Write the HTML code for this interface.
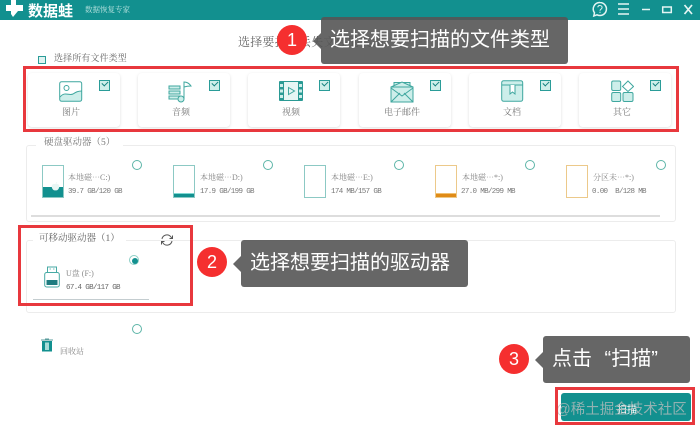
<!DOCTYPE html>
<html lang="zh"><head><meta charset="utf-8">
<style>
html,body{margin:0;padding:0;width:700px;height:429px;overflow:hidden;background:#fff}
body{position:relative;font-family:"Liberation Serif","Noto Serif CJK SC",serif;color:#777}
.a,svg.a{position:absolute}
.t{position:absolute;white-space:nowrap;line-height:1}
.card{position:absolute;top:73px;width:92px;height:54px;background:#fff;border-radius:4px;box-shadow:0 1px 3px rgba(0,0,0,.13)}
.card .t{left:0;width:86px;text-align:center;top:35px;font-size:9px;color:#777}
.card svg{position:absolute;left:31px;top:8px}
.cb{position:absolute;left:71px;top:7px;width:9px;height:9px;border:1px solid #2a9c98;background:#cfeeea}
.cb:after{content:"";position:absolute;left:1.5px;top:0;width:5px;height:3px;border:solid #14807e;border-width:0 0 1.5px 1.5px;transform:rotate(-45deg)}
.panel{position:absolute;left:26px;width:648px;border:1px solid #ececec;border-radius:3px;background:#fff}
.radio{position:absolute;width:8px;height:8px;border:1px solid #5db5a8;border-radius:50%;background:#fff}
.dr{position:absolute;top:165px;width:20px;height:31px;border:1px solid #8cc9c4;background:#fff;overflow:hidden}
.dr i{position:absolute;left:0;right:0;bottom:0;display:block}
.n{font-size:8px;color:#888}
.s{font:7.5px "Liberation Mono","Noto Serif CJK SC",monospace;letter-spacing:-.65px;color:#777}
.tip{position:absolute;background:rgba(85,85,85,.9);border-radius:3px;color:#fff;font-family:"Liberation Sans","Noto Sans CJK SC",sans-serif;white-space:nowrap}
.tip:before{content:"";position:absolute;left:-8px;top:50%;margin-top:-8px;border:8px solid transparent;border-left:0;border-right-color:rgba(85,85,85,.9)}
.num{position:absolute;width:30px;height:30px;border-radius:50%;background:#f52f2f;color:#fff;font:18px/30px "Liberation Sans",sans-serif;text-align:center}
.rb{position:absolute;border:3px solid #e8383d;box-sizing:border-box}
</style></head><body>
<div class="a" style="left:0;top:0;width:700px;height:20px;background:#12908f"></div>
<svg class="a" style="left:5px;top:0" width="20" height="18" viewBox="0 0 20 18"><path d="M6 0h5v5h7v6h-5l-5 6-2-3v-3H1V5h5z" fill="#fff"/></svg>
<div class="t" style="left:28px;top:0;font:bold 15px 'Liberation Sans','Noto Sans CJK SC',sans-serif;color:#fff;letter-spacing:0">数据蛙</div>
<div class="t" style="left:85px;top:6px;font-size:7.5px;color:#bfe5e2">数据恢复专家</div>
<svg class="a" style="left:590px;top:0" width="110" height="20" viewBox="0 0 110 20" fill="none" stroke="#e4f5f3" stroke-width="1.5"><path d="M10 2.500a6.500 6.500 0 1 1-3 12.300L3.800 16l.7-3.200A6.500 6.500 0 0 1 10 2.500z"/><path d="M7.800 7.300c.3-2.500 4.400-2.200 4.300.2 0 1.700-2.100 1.500-2.100 3.300M10 11.700v1.200" stroke-width="1"/><path d="M28 4h11M28 9h11M28 14h11"/><path d="M52 9.500h8"/><rect x="72.700" y="7" width="8.600" height="5.500"/><path d="M94.500 5l7.500 9M102 5l-7.500 9" stroke-width="1.700"/></svg>

<div class="t" style="left:238px;top:36px;font-size:12px;color:#666;letter-spacing:.2px">选择要扫描丢失文件的类型</div>
<div class="a" style="left:38px;top:56px;width:6px;height:6px;border:1px solid #2a9c98;background:#dff3f1"></div>
<div class="t" style="left:54px;top:54px;font-size:9px;color:#666;letter-spacing:.1px">选择所有文件类型</div>

<div class="card" style="left:28px"><svg width="24" height="22" viewBox="0 0 24 22" fill="none" stroke="#3fa79f"><path d="M1 16c5-6 9-1 13-3 3-2 5-3 9-3v10H1z" fill="#cdeeea" stroke="none"/><rect x=".7" y=".7" width="22" height="19.600" rx="2"/><circle cx="7.500" cy="7" r="2.500"/><path d="M1 16c5-6 9-1 13-3 3-2 5-3 9-3"/></svg><div class="t">图片</div><div class="cb"></div></div>
<div class="card" style="left:138px"><svg style="left:30px" width="26" height="22" viewBox="0 0 26 22" fill="none" stroke="#3fa79f"><rect x="1" y="5" width="11" height="3" fill="#cdeeea"/><rect x="1" y="10" width="11" height="3" fill="#cdeeea"/><rect x="1" y="15" width="11" height="3" fill="#cdeeea"/><circle cx="13" cy="18" r="3" fill="#cdeeea"/><path d="M16 18V1c2 0 5 1 7 4-2 0-4 0-7 1"/></svg><div class="t">音频</div><div class="cb"></div></div>
<div class="card" style="left:248px"><svg width="24" height="20" viewBox="0 0 24 20"><rect width="24" height="20" rx="1" fill="#2a9a94"/><rect x="5" y="1" width="14" height="18" fill="#e6f6f4"/><path d="M1 3h3v3H1zM1 8.500h3v3H1zM1 14h3v3H1zM20 3h3v3h-3zM20 8.500h3v3h-3zM20 14h3v3h-3z" fill="#cdeeea"/><path d="M9.500 6.500l6 3.500-6 3.500z" fill="none" stroke="#3fa79f"/></svg><div class="t">视频</div><div class="cb"></div></div>
<div class="card" style="left:359px"><svg width="24" height="22" viewBox="0 0 24 22" fill="none" stroke="#3fa79f"><path d="M4 5V1.500h16V5" fill="#cdeeea"/><path d="M1 6l11-5 11 5v15H1z" fill="#cdeeea"/><path d="M1 6h22M1 21l9-9M23 21l-9-9M1 7l11 8 11-8"/></svg><div class="t">电子邮件</div><div class="cb"></div></div>
<div class="card" style="left:469px"><svg style="left:32px;top:7px" width="23" height="22" viewBox="0 0 23 22" fill="none" stroke="#3fa79f"><rect x=".7" y=".7" width="21" height="20.600" rx="2" fill="#cdeeea"/><path d="M1 5h21"/><path d="M9 5v9l2.500-2 2.500 2V5" fill="#fff"/></svg><div class="t">文档</div><div class="cb"></div></div>
<div class="card" style="left:579px"><svg style="left:32px;top:7px" width="23" height="22" viewBox="0 0 23 22" fill="none" stroke="#3fa79f"><rect x=".7" y="1" width="9" height="9.500" rx="1.500" fill="#cdeeea"/><path d="M17 1l5.500 5.500L17 11.500l-5.500-5z" fill="#fff"/><rect x=".7" y="12.500" width="9" height="9" rx="1.500" fill="#cdeeea"/><rect x="12" y="12.500" width="10" height="9" rx="1.500" fill="#cdeeea"/></svg><div class="t">其它</div><div class="cb"></div></div>
<div class="rb" style="left:23px;top:66px;width:656px;height:66px"></div>

<div class="panel" style="top:145px;height:75px"></div>
<div class="t" style="left:36px;top:139px;padding:0 8px;background:#fff;font-size:9.500px;color:#777">硬盘驱动器（5）</div>
<div class="a" style="left:31px;top:215px;width:629px;height:2px;background:#ddd"></div>

<div class="dr" style="left:42px"><i style="height:10px;background:#12908f"></i></div>
<svg class="a" style="left:51px;top:182px" width="9" height="9" viewBox="0 0 9 9"><path d="M1 4.500C1 2 3 2 4.500 2.500 6 2 8 2 8 4.500 8 7 6 8.500 4.500 8 3 8.500 1 7 1 4.500zM4.500 2.500L6 0" fill="#e8f6f4" stroke="#e8f6f4" stroke-width=".6"/></svg>
<div class="t n" style="left:68px;top:174px">本地磁⋯C:)</div><div class="t s" style="left:68px;top:188px">39.7 GB/120 GB</div><div class="radio" style="left:132px;top:160px"></div>
<div class="dr" style="left:173px"><i style="height:3px;background:#12908f;border-top:1px solid #7fd8d2"></i></div>
<div class="t n" style="left:200px;top:174px">本地磁⋯D:)</div><div class="t s" style="left:200px;top:188px">17.9 GB/199 GB</div><div class="radio" style="left:263px;top:160px"></div>
<div class="dr" style="left:304px"></div>
<div class="t n" style="left:331px;top:174px">本地磁⋯E:)</div><div class="t s" style="left:331px;top:188px">174 MB/157 GB</div><div class="radio" style="left:394px;top:160px"></div>
<div class="dr" style="left:435px;border-color:#ecc98a"><i style="height:3px;background:#e08b16;border-top:1px solid #f0c070"></i></div>
<div class="t n" style="left:462px;top:174px">本地磁⋯*:)</div><div class="t s" style="left:461px;top:188px">27.0 MB/299 MB</div><div class="radio" style="left:525px;top:160px"></div>
<div class="dr" style="left:566px;border-color:#ecc98a"></div>
<div class="t n" style="left:593px;top:174px">分区未⋯*:)</div><div class="t s" style="left:592px;top:188px">0.00&nbsp; B/128 MB</div><div class="radio" style="left:656px;top:160px"></div>

<div class="panel" style="top:240px;height:71px"></div>
<div class="t" style="left:33px;top:235px;padding:0 6px;background:#fff;font-size:9.500px;color:#666">可移动驱动器（1）</div>
<svg class="a" style="left:160px;top:233px" width="14" height="14" viewBox="0 0 14 14" fill="none" stroke="#555"><path d="M2 6a5 5 0 0 1 9-2l1 1.500M12 8a5 5 0 0 1-9 2L2 8.500"/><path d="M12.500 2.500v3h-3M1.500 11.500v-3h3"/></svg>
<svg class="a" style="left:44px;top:266px" width="16" height="22" viewBox="0 0 16 22" fill="none" stroke="#47aaa4"><rect x="3.500" y="1" width="9" height="5.500"/><path d="M5.500 3h1.500M9 3h1.500" stroke-width=".8"/><rect x=".7" y="6.500" width="14.600" height="14.500" rx="2"/><rect x="2.500" y="14" width="11" height="5" fill="#1f7c80" stroke="none"/></svg>
<div class="t n" style="left:66px;top:270px">U盘 (F:)</div><div class="t s" style="left:66px;top:284px;color:#666">67.4 GB/117 GB</div>
<div class="radio" style="left:129px;top:255px;border-color:#8ccfc6"></div><div class="a" style="left:132px;top:258px;width:6px;height:6px;border-radius:50%;background:#12908f"></div>
<div class="a" style="left:33px;top:299px;width:116px;height:1px;background:#c4cdd0"></div>
<div class="rb" style="left:18px;top:225px;width:175px;height:81px"></div>

<div class="radio" style="left:132px;top:324px"></div>
<svg class="a" style="left:41px;top:338px" width="12" height="14" viewBox="0 0 12 14"><path d="M0 1.500h12v1H0zM4 .5h4v1H4z" fill="#5a9c9c"/><rect x="1" y="3" width="10" height="10.500" fill="#12908f"/><rect x="4" y="4.500" width="4" height="7.500" fill="#a6dcd8"/></svg>
<div class="t" style="left:60px;top:348px;font-size:8px;color:#888">回收站</div>

<div class="tip" style="left:321px;top:17px;width:247px;height:47px;font-size:20px;line-height:46px;text-indent:9px">选择想要扫描的文件类型</div>
<div class="num" style="left:277px;top:25px">1</div>
<div class="tip" style="left:241px;top:240px;width:227px;height:47px;font-size:20px;line-height:46px;text-indent:9px">选择想要扫描的驱动器</div>
<div class="num" style="left:197px;top:247px">2</div>
<div class="tip" style="left:543px;top:336px;width:147px;height:47px;font-size:20px;line-height:46px;text-indent:9px;word-spacing:7px">点击 “扫描”</div>
<div class="num" style="left:499px;top:344px">3</div>

<div class="a" style="left:561px;top:393px;width:130px;height:28px;border-radius:3px;background:#12908f"></div>
<div class="t" style="left:617px;top:401px;font:10px 'Liberation Sans','Noto Sans CJK SC',sans-serif;color:#fff">扫描</div>
<div class="t" style="left:556px;top:398px;font:14.500px 'Liberation Sans','Noto Sans CJK SC',sans-serif;color:rgba(190,190,190,.75)">@稀土掘金技术社区</div>
<div class="rb" style="left:555px;top:387px;width:140px;height:38px"></div>
</body></html>
